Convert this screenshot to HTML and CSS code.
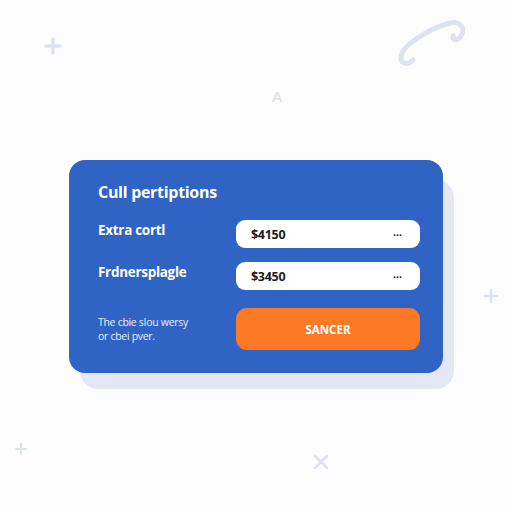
FILE: index.html
```
<!DOCTYPE html>
<html lang="en">
<head>
    <meta charset="UTF-8">
    <meta name="viewport" content="width=device-width, initial-scale=1.0">
    <title>Cull pertiptions</title>
    <link rel="stylesheet" href="styles.css">
</head>
<body>
    <!-- faint background doodles -->
    <svg class="doodles" width="512" height="512" viewBox="0 0 512 512">
        <g stroke="#dde2ef" stroke-linecap="round" fill="none">
            <path d="M53 39 V53 M46 46 H60" stroke-width="3.5"/>
            <path d="M491 290 V302 M485 296 H497" stroke-width="2.5"/>
            <path d="M21 444 V454 M16 449 H26" stroke-width="2"/>
            <path d="M315 456 L327 468 M327 456 L315 468" stroke-width="2.5"/>
            <path d="M413 60 C408 66 400 64 401 56 C403 45 430 28 450 23 C460 21 466 28 461 36 C458 41 452 41 453 36" stroke-width="5"/>
        </g>
        <text x="272" y="102" class="doodle-letter">A</text>
    </svg>

    <main class="stage">
        <div class="card-wrap">
            <div class="card-slab"></div>
            <section class="card">
                <h1 class="card-title">Cull pertiptions</h1>

                <div class="row">
                    <span class="row-label">Extra cortl</span>
                    <div class="field">
                        <span class="field-value">$4150</span>
                        <span class="field-more">&bull;&bull;&bull;</span>
                    </div>
                </div>

                <div class="row">
                    <span class="row-label">Frdnersplagle</span>
                    <div class="field">
                        <span class="field-value">$3450</span>
                        <span class="field-more">&bull;&bull;&bull;</span>
                    </div>
                </div>

                <div class="row row-action">
                    <p class="note">The cbie sIou wersy<br>or cbei pver.</p>
                    <button class="submit">SANCER</button>
                </div>
            </section>
        </div>
    </main>
</body>
</html>
```

FILE: styles.css
```
body {
    margin: 0;
    min-height: 100vh;
    background-color: #fdfdfe;
    font-family: "Open Sans", "DejaVu Sans", sans-serif;
}

.doodles {
    position: absolute;
    top: 0;
    left: 0;
}

.doodle-letter {
    font-family: "Open Sans", sans-serif;
    font-weight: 700;
    font-size: 15px;
    fill: #e1e3eb;
}

.stage {
    display: flex;
    justify-content: center;
    padding-top: 160px;
}

.card-wrap {
    position: relative;
    width: 374px;
}

/* pale slab peeking out behind the card */
.card-slab {
    position: absolute;
    top: 20px;
    left: 11px;
    width: 374px;
    height: 209px;
    border-radius: 18px;
    background-color: #e4e8f3;
}

.card {
    position: relative;
    box-sizing: border-box;
    display: flex;
    flex-direction: column;
    gap: 14px;
    padding: 20px 23px 23px 29px;
    border-radius: 16px;
    background-color: #2f63c4;
    color: #fff;
}

.card-title {
    margin: 1px 0 3px;
    font-size: 16px;
    font-weight: 700;
    letter-spacing: -0.3px;
}

.row {
    display: grid;
    grid-template-columns: 1fr 184px;
    align-items: center;
}

.row-label {
    font-size: 13.5px;
    font-weight: 700;
    letter-spacing: -0.3px;
    margin-top: -8px;
}

.field {
    display: flex;
    justify-content: space-between;
    align-items: center;
    height: 28px;
    padding: 0 18px 0 15px;
    border-radius: 9px;
    background-color: #fff;
    color: #1a1c22;
}

.field-value {
    font-size: 12.5px;
    font-weight: 700;
    letter-spacing: -0.3px;
}

.field-more {
    font-size: 8px;
    letter-spacing: 0;
}

.row-action {
    margin-top: 4px;
}

.note {
    margin: 0;
    font-size: 10.5px;
    line-height: 14px;
    color: #eaf0fc;
    letter-spacing: -0.3px;
}

.submit {
    height: 42px;
    border: none;
    border-radius: 11px;
    background-color: #fd7925;
    color: #fff;
    font-family: "Open Sans", sans-serif;
    font-size: 11.5px;
    font-weight: 700;
}
```
